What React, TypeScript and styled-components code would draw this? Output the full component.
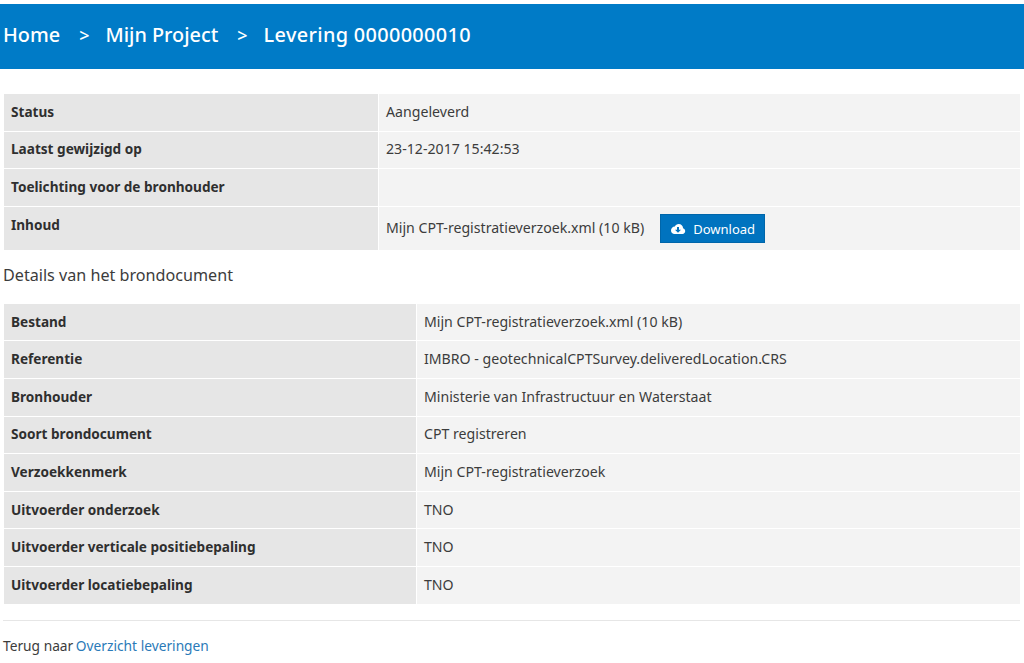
import { Fragment } from "react";
import { createGlobalStyle, styled } from "styled-components";

const GlobalStyle = createGlobalStyle`
  html, body {
    margin: 0;
    padding: 0;
    background: #ffffff;
    font-family: "Noto Sans", "Open Sans", sans-serif;
    font-size: 14px;
    color: #333333;
  }
`;

const Page = styled.div`
  padding-top: 4px;
`;

const Header = styled.header`
  height: 65px;
  background: #007bc7;
  color: #ffffff;
  display: flex;
  align-items: center;
  padding: 0 0 4px 3px;
  box-sizing: border-box;
  font-size: 19.85px;
  font-weight: 500;
`;

const Crumb = styled.span<{ $wide?: boolean }>`
  letter-spacing: ${(p) => (p.$wide ? 0.35 : 0)}px;
`;

const Separator = styled.span`
  margin: 0 16px 0 19px;
  font-size: 18px;
`;

const Content = styled.main`
  padding: 25px 4px 0 4px;
`;

const Table = styled.div<{ $labelWidth: number }>`
  display: grid;
  grid-template-columns: ${(p) => p.$labelWidth}px 1fr;
  gap: 1px;
`;

const Label = styled.div<{ $tall?: boolean }>`
  height: ${(p) => (p.$tall ? 43 : 36.6)}px;
  box-sizing: border-box;
  padding: 7.8px 7px 0;
  background: #e6e6e6;
  font-weight: 700;
  font-size: 13.6px;
  line-height: 20px;
  color: #2f2f2f;
`;

const Value = styled.div<{ $tall?: boolean }>`
  height: ${(p) => (p.$tall ? 43 : 36.6)}px;
  box-sizing: border-box;
  padding: ${(p) => (p.$tall ? "0 7px" : "7.8px 7px 0")};
  background: #f3f3f3;
  font-size: 14.15px;
  line-height: 20px;
  color: #3c3c3c;
  display: flex;
  align-items: ${(p) => (p.$tall ? "center" : "flex-start")};
`;

const DownloadButton = styled.a`
  margin-left: 16px;
  width: 105px;
  height: 29px;
  box-sizing: border-box;
  background: #0073bf;
  border: 1px solid #0066aa;
  color: #ffffff;
  font-size: 13px;
  display: flex;
  align-items: center;
  justify-content: center;
  gap: 7px;
  padding-top: 1px;
`;

const SectionTitle = styled.h2`
  margin: 13px 0 17px -1px;
  font-size: 16.15px;
  font-weight: 400;
  line-height: 24px;
  color: #3c3c3c;
`;

const Divider = styled.hr`
  border: 0;
  border-top: 1px solid #e6e6e6;
  margin: 16px 0 15px -1px;
`;

const BackRow = styled.p`
  margin: 0 0 0 -1px;
  font-size: 13.75px;
  line-height: 20px;
  color: #3c3c3c;
`;

const BackLink = styled.a`
  color: #2a7ab8;
  margin-left: -1px;
`;

function CloudDownloadIcon() {
  return (
    <svg width="16" height="12" viewBox="0 0 16 12" aria-hidden="true">
      <path
        fill="#ffffff"
        d="M13.1 5.2C13 2.9 11.1 1 8.7 1 7 1 5.5 2 4.8 3.4 2.7 3.5 1 5.3 1 7.4 1 9.4 2.6 11 4.5 11h8c1.5 0 2.7-1.3 2.7-2.9 0-1.4-.9-2.5-2.1-2.9zM8 9.7 5 6.7h2V4h2v2.7h2L8 9.7z"
      />
    </svg>
  );
}

const details: [string, string][] = [
  ["Bestand", "Mijn CPT-registratieverzoek.xml (10 kB)"],
  ["Referentie", "IMBRO - geotechnicalCPTSurvey.deliveredLocation.CRS"],
  ["Bronhouder", "Ministerie van Infrastructuur en Waterstaat"],
  ["Soort brondocument", "CPT registreren"],
  ["Verzoekkenmerk", "Mijn CPT-registratieverzoek"],
  ["Uitvoerder onderzoek", "TNO"],
  ["Uitvoerder verticale positiebepaling", "TNO"],
  ["Uitvoerder locatiebepaling", "TNO"],
];

export default function App() {
  return (
    <Page>
      <GlobalStyle />
      <Header>
        <Crumb>Home</Crumb>
        <Separator>&gt;</Separator>
        <Crumb>Mijn Project</Crumb>
        <Separator>&gt;</Separator>
        <Crumb $wide>Levering 0000000010</Crumb>
      </Header>
      <Content>
        <Table $labelWidth={374}>
          <Label>Status</Label>
          <Value>Aangeleverd</Value>
          <Label>Laatst gewijzigd op</Label>
          <Value>23-12-2017 15:42:53</Value>
          <Label>Toelichting voor de bronhouder</Label>
          <Value />
          <Label $tall>Inhoud</Label>
          <Value $tall>
            Mijn CPT-registratieverzoek.xml (10 kB)
            <DownloadButton>
              <CloudDownloadIcon />
              Download
            </DownloadButton>
          </Value>
        </Table>
        <SectionTitle>Details van het brondocument</SectionTitle>
        <Table $labelWidth={412}>
          {details.map(([label, value]) => (
            <Fragment key={label}>
              <Label>{label}</Label>
              <Value>{value}</Value>
            </Fragment>
          ))}
        </Table>
        <Divider />
        <BackRow>
          Terug naar <BackLink>Overzicht leveringen</BackLink>
        </BackRow>
      </Content>
    </Page>
  );
}
